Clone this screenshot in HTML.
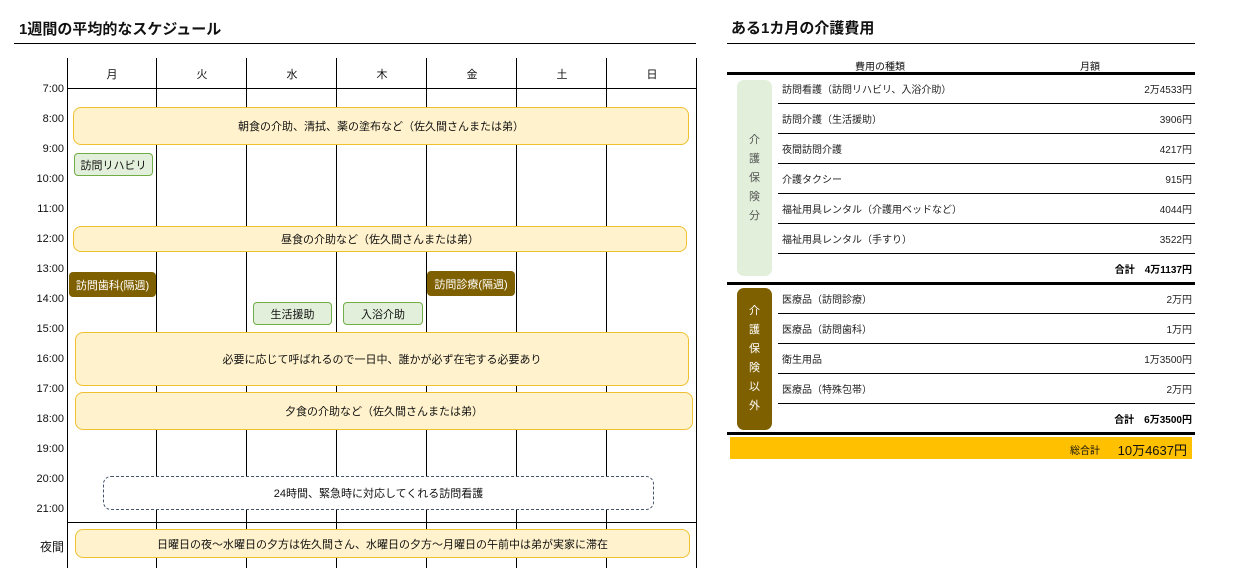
<!DOCTYPE html>
<html><head><meta charset="utf-8"><style>
*{margin:0;padding:0;box-sizing:border-box}
body{width:1249px;height:577px;background:#fff;position:relative;overflow:hidden;font-family:"Liberation Sans","Noto Sans CJK JP",sans-serif;color:#111;font-size:11px}
.a{position:absolute}
.t{font-weight:bold;font-size:15px}
.hl{position:absolute;height:1px;background:#000}
.vl{position:absolute;width:1px;background:#000}
.ev{position:absolute;display:flex;align-items:center;justify-content:center;border-radius:8px;font-size:11px;white-space:nowrap}
.y{background:#fff2cc;border:1px solid #f0c030}
.g{background:#e2efda;border:1px solid #70ad47;border-radius:4px;font-size:11px}
.b{background:#7f6000;color:#fff;border-radius:4px}
.tm{position:absolute;left:20px;width:44px;text-align:right;font-size:11px}
.dy{position:absolute;top:66px;width:90px;text-align:center;font-size:11px}
.rl{position:absolute;left:778px;width:417px;height:1px;background:#000}
.rt{position:absolute;left:782px;font-size:10px;color:#222}
.rv{position:absolute;right:57px;font-size:10px;color:#222}
.side{position:absolute;left:737px;width:35px;border-radius:7px;display:flex;flex-direction:column;align-items:center;justify-content:center;font-size:11px;line-height:19px}
</style></head><body>
<div class="a t" style="left:19px;top:18px">1週間の平均的なスケジュール</div>
<div class="hl" style="left:14px;top:43px;width:682px"></div>
<div class="a t" style="left:731px;top:17px">ある1カ月の介護費用</div>
<div class="hl" style="left:727px;top:43px;width:468px"></div>

<div class="vl" style="left:67px;top:58px;height:510px"></div>
<div class="vl" style="left:156px;top:58px;height:510px"></div>
<div class="vl" style="left:246px;top:58px;height:510px"></div>
<div class="vl" style="left:336px;top:58px;height:510px"></div>
<div class="vl" style="left:426px;top:58px;height:510px"></div>
<div class="vl" style="left:516px;top:58px;height:510px"></div>
<div class="vl" style="left:606px;top:58px;height:510px"></div>
<div class="vl" style="left:696px;top:58px;height:510px"></div>
<div class="hl" style="left:67px;top:88px;width:630px"></div>
<div class="hl" style="left:67px;top:522px;width:630px"></div>
<div class="dy" style="left:67px">月</div><div class="dy" style="left:157px">火</div><div class="dy" style="left:247px">水</div><div class="dy" style="left:337px">木</div><div class="dy" style="left:427px">金</div><div class="dy" style="left:517px">土</div><div class="dy" style="left:607px">日</div>
<div class="tm" style="top:83px">7:00</div><div class="tm" style="top:113px">8:00</div><div class="tm" style="top:143px">9:00</div><div class="tm" style="top:173px">10:00</div><div class="tm" style="top:203px">11:00</div><div class="tm" style="top:233px">12:00</div><div class="tm" style="top:263px">13:00</div><div class="tm" style="top:293px">14:00</div><div class="tm" style="top:323px">15:00</div><div class="tm" style="top:353px">16:00</div><div class="tm" style="top:383px">17:00</div><div class="tm" style="top:413px">18:00</div><div class="tm" style="top:443px">19:00</div><div class="tm" style="top:473px">20:00</div><div class="tm" style="top:503px">21:00</div><div class="tm" style="top:538px;font-size:12px">夜間</div>

<div class="ev y" style="left:73px;top:107px;width:616px;height:38px">朝食の介助、清拭、薬の塗布など（佐久間さんまたは弟）</div>
<div class="ev g" style="left:74px;top:153px;width:79px;height:23px">訪問リハビリ</div>
<div class="ev y" style="left:73px;top:226px;width:614px;height:26px">昼食の介助など（佐久間さんまたは弟）</div>
<div class="ev b" style="left:69px;top:272px;width:87px;height:25px">訪問歯科(隔週)</div>
<div class="ev b" style="left:427px;top:271px;width:88px;height:25px">訪問診療(隔週)</div>
<div class="ev g" style="left:253px;top:302px;width:79px;height:23px">生活援助</div>
<div class="ev g" style="left:343px;top:302px;width:80px;height:23px">入浴介助</div>
<div class="ev y" style="left:75px;top:332px;width:614px;height:54px">必要に応じて呼ばれるので一日中、誰かが必ず在宅する必要あり</div>
<div class="ev y" style="left:75px;top:392px;width:618px;height:38px">夕食の介助など（佐久間さんまたは弟）</div>
<div class="ev" style="left:103px;top:476px;width:551px;height:34px;border:1px dashed #44546a;background:#fff">24時間、緊急時に対応してくれる訪問看護</div>
<div class="ev y" style="left:75px;top:529px;width:615px;height:29px">日曜日の夜～水曜日の夕方は佐久間さん、水曜日の夕方～月曜日の午前中は弟が実家に滞在</div>

<div class="a" style="left:855px;top:58px;font-size:10px">費用の種類</div>
<div class="a" style="left:1080px;top:58px;font-size:10px">月額</div>
<div class="hl" style="left:727px;top:72px;width:468px;height:3px"></div>
<div class="side" style="top:80px;height:196px;background:#e2efda;color:#555">介<br>護<br>保<br>険<br>分</div>
<div class="rt" style="top:81px">訪問看護（訪問リハビリ、入浴介助）</div><div class="rv" style="top:81px">2万4533円</div>
<div class="rl" style="top:103px"></div>
<div class="rt" style="top:111px">訪問介護（生活援助）</div><div class="rv" style="top:111px">3906円</div>
<div class="rl" style="top:133px"></div>
<div class="rt" style="top:141px">夜間訪問介護</div><div class="rv" style="top:141px">4217円</div>
<div class="rl" style="top:163px"></div>
<div class="rt" style="top:171px">介護タクシー</div><div class="rv" style="top:171px">915円</div>
<div class="rl" style="top:193px"></div>
<div class="rt" style="top:201px">福祉用具レンタル（介護用ベッドなど）</div><div class="rv" style="top:201px">4044円</div>
<div class="rl" style="top:223px"></div>
<div class="rt" style="top:231px">福祉用具レンタル（手すり）</div><div class="rv" style="top:231px">3522円</div>
<div class="rl" style="top:253px"></div>
<div class="rv" style="top:261px;font-weight:bold;color:#000">合計　4万1137円</div>
<div class="hl" style="left:727px;top:282px;width:468px;height:3px"></div>
<div class="side" style="top:288px;height:142px;background:#7f6000;color:#fff">介<br>護<br>保<br>険<br>以<br>外</div>
<div class="rt" style="top:291px">医療品（訪問診療）</div><div class="rv" style="top:291px">2万円</div>
<div class="rl" style="top:313px"></div>
<div class="rt" style="top:321px">医療品（訪問歯科）</div><div class="rv" style="top:321px">1万円</div>
<div class="rl" style="top:343px"></div>
<div class="rt" style="top:351px">衛生用品</div><div class="rv" style="top:351px">1万3500円</div>
<div class="rl" style="top:373px"></div>
<div class="rt" style="top:381px">医療品（特殊包帯）</div><div class="rv" style="top:381px">2万円</div>
<div class="rl" style="top:403px"></div>
<div class="rv" style="top:411px;font-weight:bold;color:#000">合計　6万3500円</div>
<div class="hl" style="left:727px;top:432px;width:468px;height:3px"></div>
<div class="a" style="left:730px;top:437px;width:462px;height:22px;background:#ffc000"></div>
<div class="a" style="left:1070px;top:442px;font-size:10px">総合計</div>
<div class="a" style="right:62px;top:440px;font-size:13px">10万4637円</div>
</body></html>
